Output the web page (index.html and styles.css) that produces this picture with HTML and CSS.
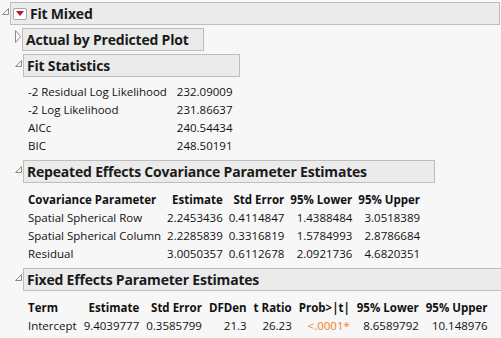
FILE: index.html
```html
<!DOCTYPE html>
<html lang="en">
<head>
  <meta charset="UTF-8" />
  <meta name="viewport" content="width=device-width, initial-scale=1.0" />
  <title>Fit Mixed</title>
  <link rel="stylesheet" href="styles.css">
</head>
<body>
  <div class="node top">
    <svg class="toggle open" width="7" height="7" viewBox="0 0 7 7">
      <polygon points="6.5,0.5 6.5,6.5 0.5,6.5" fill="#f4f4f4" stroke="#8c8c8c" />
    </svg>
    <div class="node-body">
      <div class="head head-wide">
        <span class="menu-btn">
          <svg width="8" height="5" viewBox="0 0 8 5"><polygon points="0,0 8,0 4,5" fill="#c8102e" /></svg>
        </span>
        Fit Mixed
      </div>

      <div class="children">
        <div class="node">
          <svg class="toggle closed" width="7" height="13" viewBox="0 0 7 13">
            <polygon points="0.5,0.5 5.5,6.5 0.5,12.5" fill="#fff" stroke="#8c8c8c" />
          </svg>
          <div class="node-body">
            <div class="head w-plot">Actual by Predicted Plot</div>
          </div>
        </div>

        <div class="node">
          <svg class="toggle open" width="7" height="7" viewBox="0 0 7 7">
            <polygon points="6.5,0.5 6.5,6.5 0.5,6.5" fill="#f4f4f4" stroke="#8c8c8c" />
          </svg>
          <div class="node-body">
            <div class="head w-stats">Fit Statistics</div>
            <table class="report stats">
              <tr><td>-2 Residual Log Likelihood</td><td>232.09009</td></tr>
              <tr><td>-2 Log Likelihood</td><td>231.86637</td></tr>
              <tr><td>AICc</td><td>240.54434</td></tr>
              <tr><td>BIC</td><td>248.50191</td></tr>
            </table>
          </div>
        </div>

        <div class="node">
          <svg class="toggle open" width="7" height="7" viewBox="0 0 7 7">
            <polygon points="6.5,0.5 6.5,6.5 0.5,6.5" fill="#f4f4f4" stroke="#8c8c8c" />
          </svg>
          <div class="node-body">
            <div class="head w-cov">Repeated Effects Covariance Parameter Estimates</div>
            <table class="report cov">
              <tr>
                <th class="txt">Covariance Parameter</th>
                <th>Estimate</th>
                <th>Std Error</th>
                <th>95% Lower</th>
                <th>95% Upper</th>
              </tr>
              <tr>
                <td class="txt">Spatial Spherical Row</td>
                <td>2.2453436</td>
                <td>0.4114847</td>
                <td>1.4388484</td>
                <td>3.0518389</td>
              </tr>
              <tr>
                <td class="txt">Spatial Spherical Column</td>
                <td>2.2285839</td>
                <td>0.3316819</td>
                <td>1.5784993</td>
                <td>2.8786684</td>
              </tr>
              <tr>
                <td class="txt">Residual</td>
                <td>3.0050357</td>
                <td>0.6112678</td>
                <td>2.0921736</td>
                <td>4.6820351</td>
              </tr>
            </table>
          </div>
        </div>

        <div class="node">
          <svg class="toggle open" width="7" height="7" viewBox="0 0 7 7">
            <polygon points="6.5,0.5 6.5,6.5 0.5,6.5" fill="#f4f4f4" stroke="#8c8c8c" />
          </svg>
          <div class="node-body">
            <div class="head w-fixed">Fixed Effects Parameter Estimates</div>
            <table class="report fixed">
              <tr>
                <th class="txt">Term</th>
                <th>Estimate</th>
                <th>Std Error</th>
                <th>DFDen</th>
                <th>t Ratio</th>
                <th>Prob&gt;|t|</th>
                <th>95% Lower</th>
                <th>95% Upper</th>
              </tr>
              <tr>
                <td class="txt">Intercept</td>
                <td>9.4039777</td>
                <td>0.3585799</td>
                <td>21.3</td>
                <td>26.23</td>
                <td class="signif">&lt;.0001*</td>
                <td>8.6589792</td>
                <td>10.148976</td>
              </tr>
            </table>
          </div>
        </div>
      </div>
    </div>
  </div>
</body>
</html>
```

FILE: styles.css
```css
body {
  margin: 0;
  padding: 2px 0 0 2px;
  background: #f7f7f7;
  color: #111;
  font-family: "Open Sans", "Noto Sans", sans-serif;
  font-size: 11.5px;
  overflow: hidden;
}

/* outline nodes: disclosure triangle on the left, header and content on the right */
.node {
  display: flex;
  align-items: flex-start;
}
.node-body {
  flex: 1;
  min-width: 0;
}
.toggle {
  flex: none;
  display: block;
}
.toggle.open {
  margin: 6px 1px 0 0;
}
.toggle.closed {
  margin: 2px 0 0 0;
}

.children {
  padding: 3px 0 0 5px;
  display: flex;
  flex-direction: column;
  gap: 3px;
}

.head {
  box-sizing: border-box;
  height: 23px;
  display: flex;
  align-items: center;
  gap: 3px;
  padding: 0 3px;
  background: #ebebeb;
  border: 1px solid #bdbdbd;
  font-size: 14px;
  font-weight: bold;
  color: #1a1a1a;
  white-space: nowrap;
  letter-spacing: -0.2px;
}
.head-wide {
  width: 490px;
  padding-left: 2px;
}
.w-plot { width: 182px; }
.w-stats { width: 217px; }
.w-cov { width: 412px; }
.w-fixed { width: 490px; }

.menu-btn {
  box-sizing: border-box;
  width: 14px;
  height: 12px;
  display: inline-flex;
  align-items: center;
  justify-content: center;
  background: #fff;
  border: 1px solid #a8a8a8;
  border-radius: 2px;
}
.menu-btn svg {
  display: block;
}

/* report tables under each header */
.report {
  border-collapse: collapse;
  margin: 6px 0 2px 5px;
}
.report td,
.report th {
  padding: 0;
  height: 18px;
  line-height: 18px;
  text-align: right;
  white-space: nowrap;
}
.report th {
  font-weight: bold;
}
.report .txt {
  text-align: left;
}
.stats td:first-child {
  text-align: left;
  padding-right: 10px;
}
.cov,
.fixed {
  margin-top: 8px;
}
.cov td + td,
.cov th + th {
  padding-left: 6px;
}
.cov tr:first-child,
.fixed tr:first-child {
  height: 17px;
}
.fixed td + td,
.fixed th + th {
  padding-left: 7px;
}
.signif {
  color: #f07f1c;
}
```
